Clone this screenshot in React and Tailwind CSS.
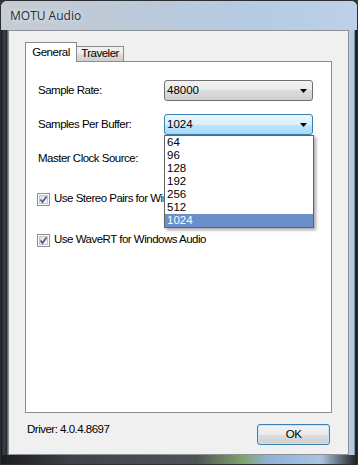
import React from 'react';

const ui = "font-['Liberation_Sans',Arial,sans-serif] text-[11.5px] tracking-[-0.5px] text-black";

const Arrow = () => (
  <svg width="7" height="4" viewBox="0 0 7 4" className="shrink-0">
    <path d="M0 0h7L3.5 4z" fill="#000" />
  </svg>
);

const Select = ({ value, open, children }) => (
  <div className="relative w-[149px]">
    <div
      className={`flex h-[21px] items-center justify-between rounded-[3px] border pl-[2px] pr-[5px] ${
        open
          ? 'border-[#3c7fb1] bg-[linear-gradient(to_bottom,#eaf6fd_0%,#d9f0fc_50%,#bee6fd_50%,#a7d9f5_100%)]'
          : 'border-[#707070] bg-[linear-gradient(to_bottom,#f2f2f2_0%,#ebebeb_50%,#dddddd_50%,#cfcfcf_100%)]'
      }`}
    >
      <span className="leading-none tracking-normal">{value}</span>
      <Arrow />
    </div>
    {children}
  </div>
);

const Checkbox = () => (
  <div className="flex h-[13px] w-[13px] shrink-0 items-center justify-center border border-[#8e8f8f] bg-white p-[1px]">
    <div className="relative h-full w-full border border-[#c6c6c6] bg-[linear-gradient(135deg,#dcdcdc_0%,#fbfbfb_100%)]">
      <svg width="9" height="9" viewBox="0 0 9 9" className="absolute -left-[1px] -top-[1px]">
        <path d="M1.5 4.5 L3.5 7 L7.5 1.5" fill="none" stroke="#4a5f97" strokeWidth="1.8" />
      </svg>
    </div>
  </div>
);

const sizes = ['64', '96', '128', '192', '256', '512', '1024'];

export default function App() {
  return (
    <div className="h-[465px] w-[358px] overflow-hidden bg-[#333]">
      <div className="flex h-full w-full flex-col overflow-hidden rounded-t-[7px] border border-[#2a2d31] bg-[#b6cce6]">
        {/* title bar */}
        <div className="flex h-[29px] shrink-0 items-center bg-[linear-gradient(to_right,#c7ccd2_0%,#bcc9d8_35%,#b4cbe4_70%,#bdd1e8_100%)] pl-[9px]">
          <span className="font-['Open_Sans','Noto_Sans',sans-serif] text-[12px] text-[#1b2e48] [text-shadow:0_0_6px_#ffffff]">
            MOTU Audio
          </span>
        </div>

        <div className="flex min-h-0 flex-1">
          <div className="w-[7px] shrink-0 bg-[linear-gradient(to_right,#16181a_0%,#3c4045_40%,#2a2d31_80%,#7b7f84_100%)]" />

          {/* client area */}
          <div className={`flex flex-1 flex-col border border-[#8d9196] bg-[#f0f0f0] px-[16px] pt-[11px] ${ui}`}>
            {/* tabs */}
            <div className="relative z-10 -mb-px flex h-[20px] items-end">
              <div className="flex h-[20px] w-[52px] items-center justify-center border border-b-0 border-[#898c95] bg-white pt-[1px]">
                General
              </div>
              <div className="mb-px flex h-[15px] w-[47px] items-center justify-center border border-b-0 border-l-0 border-[#898c95] bg-[linear-gradient(to_bottom,#f2f2f2_0%,#ebebeb_50%,#dddddd_50%,#cfcfcf_100%)]">
                Traveler
              </div>
            </div>

            {/* panel */}
            <div className="flex h-[352px] flex-col border border-[#898c95] bg-white pl-[12px] pt-[18px]">
              <div className="flex flex-col gap-[13px]">
                <div className="flex h-[21px] items-center">
                  <span className="w-[126px]">Sample Rate:</span>
                  <Select value="48000" />
                </div>
                <div className="relative z-20 flex h-[21px] items-center">
                  <span className="w-[126px]">Samples Per Buffer:</span>
                  <Select value="1024" open>
                    <div className="absolute left-0 top-full w-[150px] border border-[#646464] bg-white tracking-normal shadow-[2px_2px_3px_rgba(0,0,0,0.35)]">
                      {sizes.map((s) => (
                        <div
                          key={s}
                          className={`flex h-[13px] items-center pl-[2px] leading-none ${
                            s === '1024' ? 'bg-[#6a8fca] text-white' : ''
                          }`}
                        >
                          {s}
                        </div>
                      ))}
                    </div>
                  </Select>
                </div>
                <div className="flex h-[21px] items-center">
                  <span className="w-[126px]">Master Clock Source:</span>
                  <Select value="" />
                </div>
              </div>

              <div className="mt-[22px] flex flex-col gap-[25px]">
                <div className="-ml-px flex h-[16px] items-center gap-[4px]">
                  <Checkbox />
                  <span className="w-[110px] overflow-hidden whitespace-nowrap">Use Stereo Pairs for Windows Audio</span>
                </div>
                <div className="-ml-px flex h-[16px] items-center gap-[4px]">
                  <Checkbox />
                  <span>Use WaveRT for Windows Audio</span>
                </div>
              </div>
            </div>

            {/* footer */}
            <div className="mt-[11px] flex h-[21px] items-start justify-between px-[2px]">
              <span className="-mt-[3px]">Driver: 4.0.4.8697</span>
              <button className="h-[21px] w-[73px] rounded-[3px] border border-[#3c7fb1] bg-[linear-gradient(to_bottom,#f2f2f2_0%,#ebebeb_50%,#dddddd_50%,#cfcfcf_100%)] shadow-[inset_0_0_0_1px_#c7e6f9]">
                OK
              </button>
            </div>
          </div>

          <div className="w-[8px] shrink-0 bg-[linear-gradient(to_right,#b4cbe5_0%,#b4cbe5_65%,#2a2d30_75%,#1a1c1e_100%)]" />
        </div>

        {/* bottom frame */}
        <div className="h-[9px] shrink-0 bg-[linear-gradient(to_right,#1a1c1e_0%,#3f4246_20%,#505357_55%,#7fa36c_68%,#8fb2d6_75%,#a9c4e2_90%,#1e2022_100%)]" />
      </div>
    </div>
  );
}
